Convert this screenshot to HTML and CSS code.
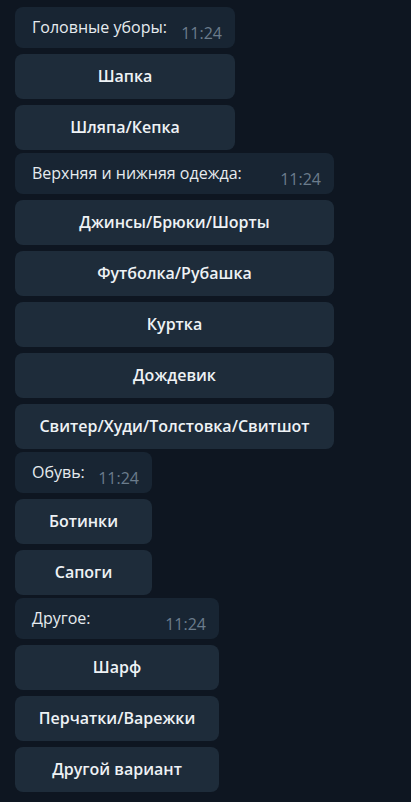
FILE: index.html
```html
<!DOCTYPE html>
<html lang="ru">
<head>
<meta charset="utf-8">
<link rel="stylesheet" href="styles.css">
</head>
<body>
<div class="chat">
  <div class="group g1">
    <div class="bubble"><span class="text">Головные уборы:</span><span class="time">11:24</span></div>
    <div class="btn">Шапка</div>
    <div class="btn">Шляпа/Кепка</div>
  </div>
  <div class="group g2">
    <div class="bubble"><span class="text">Верхняя и нижняя одежда:</span><span class="time">11:24</span></div>
    <div class="btn">Джинсы/Брюки/Шорты</div>
    <div class="btn">Футболка/Рубашка</div>
    <div class="btn">Куртка</div>
    <div class="btn">Дождевик</div>
    <div class="btn">Свитер/Худи/Толстовка/Свитшот</div>
  </div>
  <div class="group g3">
    <div class="bubble"><span class="text">Обувь:</span><span class="time">11:24</span></div>
    <div class="btn">Ботинки</div>
    <div class="btn">Сапоги</div>
  </div>
  <div class="group g4">
    <div class="bubble"><span class="text">Другое:</span><span class="time">11:24</span></div>
    <div class="btn">Шарф</div>
    <div class="btn">Перчатки/Варежки</div>
    <div class="btn">Другой вариант</div>
  </div>
</div>
</body>
</html>
```
FILE: styles.css
```css
html, body {
  margin: 0;
  padding: 0;
  background: #0e1621;
  height: 100%;
}
body {
  font-family: "Open Sans", "Noto Sans", sans-serif;
  color: #e9edf1;
}
.chat {
  display: flex;
  flex-direction: column;
  gap: 3px;
  padding: 7px 0 0 15px;
}
.group {
  display: flex;
  flex-direction: column;
  gap: 6px;
}
.g1 { width: 220px; }
.g2 { width: 319px; }
.g3 { width: 137px; }
.g4 { width: 204px; }
.bubble {
  height: 41px;
  box-sizing: border-box;
  background: #182533;
  border-radius: 8px;
  display: flex;
  justify-content: space-between;
  padding: 0 13px 0 17px;
}
.text {
  font-size: 16px;
  line-height: 20px;
  padding-top: 10px;
  color: #e6ebef;
}
.time {
  font-size: 16px;
  line-height: 20px;
  padding-top: 16px;
  color: #6b7c8c;
}
.btn {
  height: 45px;
  box-sizing: border-box;
  padding-bottom: 2px;
  background: #1e2c3a;
  border-radius: 8px;
  display: flex;
  align-items: center;
  justify-content: center;
  font-size: 16px;
  font-weight: 600;
  color: #eef2f5;
}
```
